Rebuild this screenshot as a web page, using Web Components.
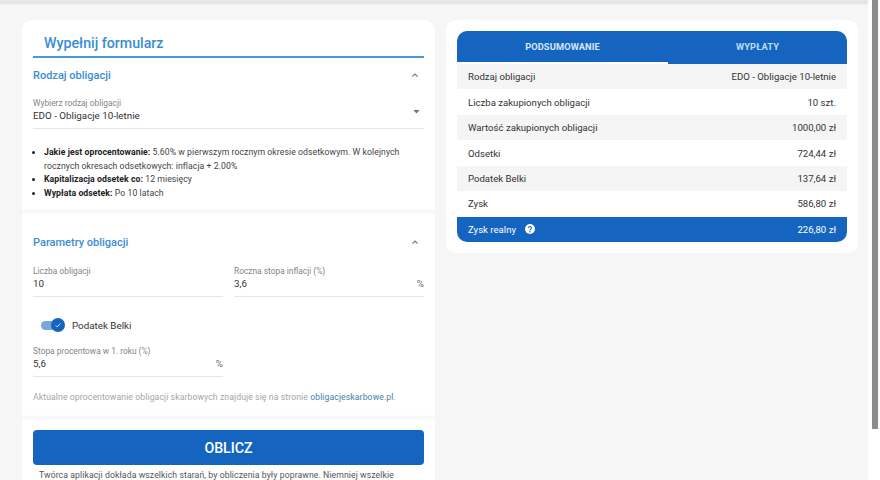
<!DOCTYPE html>
<html lang="pl">
<head>
<meta charset="utf-8">
<title>Obligacje</title>
<style>
  html, body { margin: 0; height: 100%; overflow: hidden; background: #fff; }
  body { font-family: Roboto, "Liberation Sans", sans-serif; color: #212121; }
</style>
</head>
<body>
<app-shell>
  <form-card slot="left"></form-card>
  <summary-card slot="right"></summary-card>
</app-shell>

<script>
const chevron = `<svg width="10" height="10" viewBox="0 0 24 24" fill="#5f6f7a"><path d="M12 8l-7 7 1.8 1.8L12 11.6l5.2 5.2L19 15z"/></svg>`

customElements.define('app-shell', class extends HTMLElement {
  constructor () {
    super()
    this.attachShadow({ mode: 'open' }).innerHTML = `
    <style>
      :host { display: flex; height: 480px; overflow: hidden; }
      #page { width: 868px; background: #f6f6f6; }
      #top { height: 2px; background: #e8e8e8; box-shadow: 0 1px 3px rgba(0,0,0,.18); }
      #main { display: grid; grid-template-columns: 413px 412px; gap: 11px; padding: 18px 0 0 22px; align-items: start; }
      #track { width: 12px; padding-left: 4px; box-sizing: border-box; }
      #thumb { width: 6px; height: 429px; background: #8c8c8c; }
    </style>
    <div id="page">
      <div id="top"></div>
      <div id="main"><slot name="left"></slot><slot name="right"></slot></div>
    </div>
    <div id="track"><div id="thumb"></div></div>`
  }
})

customElements.define('panel-section', class extends HTMLElement {
  constructor () {
    super()
    this.attachShadow({ mode: 'open' }).innerHTML = `
    <style>
      :host { display: block; }
      #head { display: flex; justify-content: space-between; align-items: center; height: 20px; color: #3a8dd4;
        font-size: 11px; font-weight: 500; padding-right: 4px; }
      svg { display: block; }
    </style>
    <div id="head"><span id="t"></span>${chevron}</div>
    <slot></slot>`
  }

  connectedCallback () {
    this.shadowRoot.querySelector('#t').textContent = this.getAttribute('heading')
  }
})

customElements.define('text-field', class extends HTMLElement {
  constructor () {
    super()
    this.attachShadow({ mode: 'open' }).innerHTML = `
    <style>
      :host { display: block; border-bottom: 1px solid #e6e6e6; height: 32px; box-sizing: border-box; }
      #label { font-size: 8.4px; line-height: 12px; color: #858585; white-space: nowrap; }
      #row { display: flex; justify-content: space-between; align-items: center; font-size: 9.8px; line-height: 13px; color: #333; }
      #suffix { color: #666; }
      svg { display: block; margin: -6px 4px 0 0; }
    </style>
    <div id="label"></div>
    <div id="row"><span id="value"></span><span id="suffix"></span></div>`
  }

  connectedCallback () {
    const root = this.shadowRoot
    root.querySelector('#label').textContent = this.getAttribute('label')
    root.querySelector('#value').textContent = this.getAttribute('value')
    if (this.hasAttribute('select')) {
      root.querySelector('#suffix').innerHTML = `<svg width="7" height="4" viewBox="0 0 8 5"><path d="M0 0h8L4 4.5z" fill="#757575"/></svg>`
    } else {
      root.querySelector('#suffix').textContent = this.getAttribute('suffix') || ''
    }
  }
})

customElements.define('toggle-switch', class extends HTMLElement {
  constructor () {
    super()
    this.attachShadow({ mode: 'open' }).innerHTML = `
    <style>
      :host { display: flex; align-items: center; gap: 7px; height: 16px; padding-left: 8px; font-size: 9.8px; color: #333; }
      #track { width: 24px; height: 14px; position: relative; }
      #bar { width: 23px; height: 9px; border-radius: 5px; background: #7ba6dc; margin-top: 2.5px; }
      #knob { position: absolute; right: 0; top: 0; width: 14px; height: 14px; border-radius: 50%; background: #1565c0; display: flex;
        align-items: center; justify-content: center; }
      svg { display: block; }
    </style>
    <div id="track">
      <div id="bar"></div>
      <div id="knob"><svg width="8" height="8" viewBox="0 0 24 24"><path d="M5 13l4.5 4.5L19 7.5" fill="none" stroke="#fff" stroke-width="2.4"/></svg></div>
    </div>
    <slot></slot>`
  }
})

customElements.define('form-card', class extends HTMLElement {
  constructor () {
    super()
    this.attachShadow({ mode: 'open' }).innerHTML = `
    <style>
      :host { display: block; background: #fff; border-radius: 10px 10px 0 0; height: 460px; }
      #title { margin: 0 11px; padding: 14px 0 0 11px; height: 22px; border-bottom: 2px solid #4a98da;
        font-size: 14.2px; line-height: 18px; font-weight: 500; color: #3a8dd4; }
      .block { padding: 0 11px; }
      #first { height: 145px; padding-top: 7px; }
      #first text-field { margin-top: 12px; }
      ul { margin: 17px 0 0; padding: 0 0 0 11px; font-size: 8.7px; line-height: 13.7px; color: #444; letter-spacing: .06px; }
      li::marker { color: #222; }
      b { color: #222; font-weight: 700; }
      .gap { height: 3px; background: #f8f8f8; box-shadow: 0 0 2px rgba(0,0,0,.06); }
      #second { height: 184px; padding-top: 19px; }
      .two { display: grid; grid-template-columns: 190px 190px; gap: 11px; margin-top: 13px; }
      toggle-switch { margin: 20px 0 12px; }
      #note { margin-top: 14px; font-size: 8.7px; line-height: 12px; color: #a6a6a6; letter-spacing: .08px; white-space: nowrap; }
      #note a { color: #4b7fa8; text-decoration: none; }
      #third { padding-top: 11px; }
      #oblicz { height: 35px; border-radius: 4px; background: #1565c0; color: #fff; font-size: 14.2px; font-weight: 500;
        display: flex; align-items: center; justify-content: center; box-sizing: border-box; }
      #disclaimer { margin-top: 6px; padding: 0 6px; font-size: 8.7px; line-height: 9px; color: #555; letter-spacing: .08px; white-space: nowrap; }
    </style>
    <div id="title">Wypełnij formularz</div>
    <div class="block" id="first">
      <panel-section heading="Rodzaj obligacji">
        <text-field select label="Wybierz rodzaj obligacji" value="EDO - Obligacje 10-letnie"></text-field>
        <ul>
          <li><b>Jakie jest oprocentowanie:</b> 5.60% w pierwszym rocznym okresie odsetkowym. W kolejnych rocznych okresach odsetkowych: inflacja + 2.00%</li>
          <li><b>Kapitalizacja odsetek co:</b> 12 miesięcy</li>
          <li><b>Wypłata odsetek:</b> Po 10 latach</li>
        </ul>
      </panel-section>
    </div>
    <div class="gap"></div>
    <div class="block" id="second">
      <panel-section heading="Parametry obligacji">
        <div class="two">
          <text-field label="Liczba obligacji" value="10"></text-field>
          <text-field label="Roczna stopa inflacji (%)" value="3,6" suffix="%"></text-field>
        </div>
        <toggle-switch>Podatek Belki</toggle-switch>
        <div class="two" style="margin-top:0">
          <text-field label="Stopa procentowa w 1. roku (%)" value="5,6" suffix="%"></text-field>
        </div>
        <div id="note">Aktualne oprocentowanie obligacji skarbowych znajduje się na stronie <a href="#">obligacjeskarbowe.pl</a>.</div>
      </panel-section>
    </div>
    <div class="gap"></div>
    <div class="block" id="third">
      <div id="oblicz">OBLICZ</div>
      <div id="disclaimer">Twórca aplikacji dokłada wszelkich starań, by obliczenia były poprawne. Niemniej wszelkie</div>
    </div>`
  }
})

customElements.define('summary-row', class extends HTMLElement {
  constructor () {
    super()
    this.attachShadow({ mode: 'open' }).innerHTML = `
    <style>
      :host { display: flex; justify-content: space-between; align-items: center; height: 25.45px; padding: 0 11px;
        font-size: 9.6px; color: #333; background: #fff; }
      :host(.odd) { background: #f5f5f5; }
      :host(.total) { background: #1565c0; color: #fff; border-radius: 0 0 10px 10px; }
      #left { display: flex; align-items: center; gap: 9px; }
    </style>
    <span id="left"><slot></slot></span>
    <slot name="value"></slot>`
  }
})

customElements.define('summary-card', class extends HTMLElement {
  constructor () {
    super()
    const rows = [
      ['Rodzaj obligacji', 'EDO - Obligacje 10-letnie'],
      ['Liczba zakupionych obligacji', '10 szt.'],
      ['Wartość zakupionych obligacji', '1000,00 zł'],
      ['Odsetki', '724,44 zł'],
      ['Podatek Belki', '137,64 zł'],
      ['Zysk', '586,80 zł']
    ]
    this.attachShadow({ mode: 'open' }).innerHTML = `
    <style>
      :host { display: block; background: #fff; border-radius: 10px; padding: 11px; }
      #tabs { display: grid; grid-template-columns: 211px 1fr; height: 33px; background: #1565c0; border-radius: 10px 10px 0 0;
        font-size: 9.3px; font-weight: 700; color: #d5e8fa; letter-spacing: .1px; }
      #tabs div { display: flex; align-items: center; justify-content: center; box-sizing: border-box; }
      #tabs .on { border-bottom: 2px solid #fff; }
      #tabs .off { color: #bcdcf7; border-bottom: 2px solid transparent; }
      svg { display: block; }
    </style>
    <div id="tabs"><div class="on">PODSUMOWANIE</div><div class="off">WYPŁATY</div></div>
    ${rows.map((r, i) => `<summary-row class="${i % 2 ? '' : 'odd'}">${r[0]}<span slot="value">${r[1]}</span></summary-row>`).join('')}
    <summary-row class="total">Zysk realny
      <svg width="10" height="10" viewBox="0 0 24 24"><circle cx="12" cy="12" r="12" fill="#fff"/><path d="M8.5 9.5a3.5 3.5 0 1 1 5.6 2.8c-1.2.9-2.1 1.5-2.1 3" fill="none" stroke="#1565c0" stroke-width="2.6"/><circle cx="12" cy="18.6" r="1.7" fill="#1565c0"/></svg>
      <span slot="value">226,80 zł</span></summary-row>`
  }
})
</script>
</body>
</html>
